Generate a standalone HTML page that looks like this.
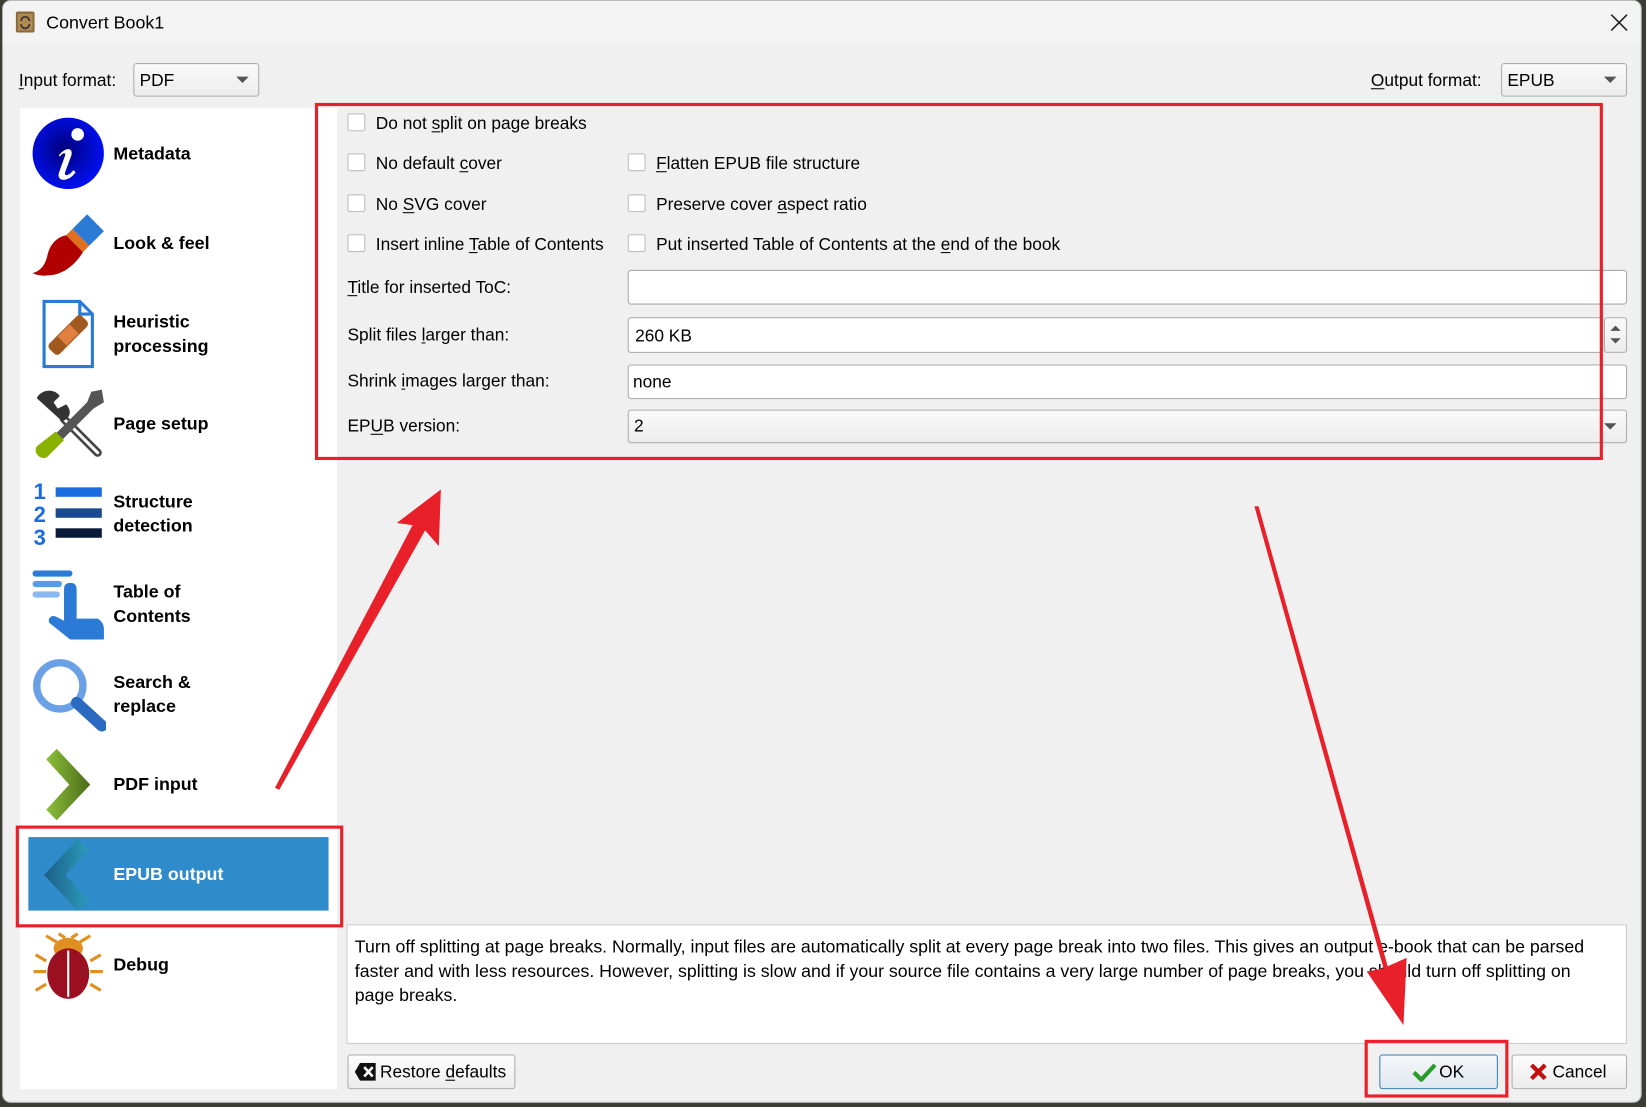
<!DOCTYPE html>
<html><head><meta charset="utf-8"><style>
html,body{margin:0;padding:0;width:1646px;height:1107px;overflow:hidden;background:#3a3d34;}
#w{position:absolute;left:0;top:0;width:1568px;height:1054px;transform:scale(1.0497,1.0503);transform-origin:0 0;font-family:"Liberation Sans",sans-serif;color:#000;}
.a{position:absolute;}
.win{left:2px;top:0;width:1562px;height:1050px;background:#f0f0f0;border-radius:8px;border:1px solid #bbb;box-sizing:border-box;}
.tb{left:3px;top:1px;width:1560px;height:42px;background:#f3f3f3;border-radius:8px 8px 0 0;}
.t{font-size:16.5px;white-space:nowrap;line-height:20px;}
.cb{width:17px;height:17px;background:#fff;border:1px solid #bcbcbc;box-sizing:border-box;border-radius:2px;}
.fld{background:#fff;border:1px solid #a8a8a8;border-radius:3px;box-sizing:border-box;}
.cmb{background:linear-gradient(#fafafa,#ececec);border:1px solid #adadad;border-radius:3px;box-sizing:border-box;}
.arr{width:0;height:0;border-left:6px solid transparent;border-right:6px solid transparent;border-top:6px solid #555;}
.side{left:19px;top:103px;width:302px;height:934px;background:#fff;}
.it{font-weight:bold;font-size:17px;line-height:23px;left:108px;}
.btn{background:linear-gradient(#fdfdfd,#ececec);border:1px solid #adadad;border-radius:3px;box-sizing:border-box;}
u{text-decoration:underline;text-underline-offset:2px}
</style></head><body><div id="w">
<div class="a win"></div>
<div class="a tb"></div>
<svg class="a" style="left:15px;top:11px" width="18" height="20"><rect x="0" y="0" width="18" height="20" rx="2" fill="#8a6a3c"/><rect x="2" y="2" width="14" height="16" fill="#b08a50"/><path d="M5 9a4 4 0 0 1 8 0M13 12a4 4 0 0 1-8 0" stroke="#333" stroke-width="1.6" fill="none"/></svg>
<div class="a t" style="left:44px;top:12px;font-size:17px">Convert Book1</div>
<svg class="a" style="left:1534px;top:13px" width="17" height="17"><path d="M1 1L16 16M16 1L1 16" stroke="#222" stroke-width="1.5"/></svg>

<div class="a t" style="left:18px;top:67px"><u>I</u>nput format:</div>
<div class="a cmb" style="left:127px;top:60px;width:120px;height:32px"></div>
<div class="a t" style="left:133px;top:67px">PDF</div>
<div class="a arr" style="left:225px;top:73px"></div>
<div class="a t" style="left:1306px;top:67px"><u>O</u>utput format:</div>
<div class="a cmb" style="left:1430px;top:60px;width:120px;height:32px"></div>
<div class="a t" style="left:1436px;top:67px">EPUB</div>
<div class="a arr" style="left:1528px;top:73px"></div>

<div class="a side"></div>
<svg class="a" style="left:31px;top:112px" width="68" height="68"><defs><radialGradient id="g1" cx=".45" cy=".45" r=".55"><stop offset="0" stop-color="#00007a"/><stop offset="1" stop-color="#0010f0"/></radialGradient></defs><circle cx="34" cy="34" r="34" fill="url(#g1)"/><circle cx="43" cy="16" r="6" fill="#fff"/><path d="M25 36c6-8 14-8 12 0l-6 16c-1 4 3 4 8-2l2 2c-6 9-18 10-16 1l6-17c1-3-2-3-5 1z" fill="#fff"/></svg>
<svg class="a" style="left:31px;top:202px" width="70" height="62"><path d="M52 2l16 16-14 14-16-16z" fill="#2a7ad6"/><path d="M38 16l16 16-6 6-16-16z" fill="#e07020"/><path d="M32 22l16 16c-6 10-16 20-30 22-8 1-14 0-18-2 8-2 12-8 14-16 2-10 8-18 18-20z" fill="#b00000"/></svg>
<svg class="a" style="left:40px;top:285px" width="50" height="66"><path d="M2 2h34l12 12v50H2z" fill="#fff" stroke="#2a7ad6" stroke-width="3"/><path d="M36 2v12h12" fill="none" stroke="#2a7ad6" stroke-width="3"/><rect x="18" y="12" width="14" height="44" rx="4" transform="rotate(45 25 34)" fill="#a05a20"/><rect x="19" y="26" width="12" height="16" transform="rotate(45 25 34)" fill="#e08040"/></svg>
<svg class="a" style="left:31px;top:369px" width="70" height="70"><path d="M30 30L62 62" stroke="#444" stroke-width="8" stroke-linecap="round"/><path d="M30 30L62 62" stroke="#fff" stroke-width="3" stroke-linecap="round"/><path d="M4 10c4-8 16-10 22-2l-6 6 4 6 8-4c6 6 4 14-4 16z" fill="#333"/><path d="M66 2l2 12-10 6-34 34-6-6 34-34 4-10z" fill="#555"/><path d="M22 42l8 8-16 16c-6 4-14-4-10-10z" fill="#8ab000"/></svg>
<svg class="a" style="left:32px;top:455px" width="68" height="68"><text x="0" y="20" font-family="Liberation Sans" font-weight="bold" font-size="21" fill="#1a6ce0">1</text><text x="0" y="42" font-family="Liberation Sans" font-weight="bold" font-size="21" fill="#1a6ce0">2</text><text x="0" y="64" font-family="Liberation Sans" font-weight="bold" font-size="21" fill="#1a6ce0">3</text><rect x="21" y="9" width="44" height="9" fill="#1a6ce0"/><rect x="21" y="29" width="44" height="9" fill="#1a4a90"/><rect x="21" y="48" width="44" height="9" fill="#0a1a3a"/></svg>
<svg class="a" style="left:31px;top:543px" width="70" height="66"><rect x="0" y="0" width="38" height="6" rx="3" fill="#2a7ad6"/><rect x="0" y="10" width="28" height="6" rx="3" fill="#5a9ae6"/><rect x="0" y="20" width="26" height="6" rx="3" fill="#8ab8f0"/><path d="M36 12c4 0 6 2 6 6v28h20c4 2 6 6 6 10v10H36L16 50c-2-4 2-8 6-6l8 4V18c0-4 2-6 6-6z" fill="#2a7ad6"/></svg>
<svg class="a" style="left:31px;top:627px" width="70" height="70"><circle cx="26" cy="26" r="22" fill="none" stroke="#6aa0e6" stroke-width="7"/><path d="M42 42l24 22" stroke="#2a6ac0" stroke-width="11" stroke-linecap="round"/></svg>
<svg class="a" style="left:42px;top:713px" width="44" height="68"><defs><linearGradient id="gg" x1="0" x2="1"><stop offset="0" stop-color="#8cc03a"/><stop offset="1" stop-color="#4a6a18"/></linearGradient></defs><path d="M2 10L12 0l32 34-32 34-10-10 22-24z" fill="url(#gg)"/></svg>
<div class="a" style="left:27px;top:797px;width:286px;height:70px;background:#2f8bc9"></div>
<svg class="a" style="left:42px;top:799px" width="44" height="68"><defs><linearGradient id="gb" x1="0" x2="1"><stop offset="0" stop-color="#1c5e88"/><stop offset="1" stop-color="#2a9ab8"/></linearGradient></defs><path d="M42 10L32 0 0 34l32 34 10-10-22-24z" fill="url(#gb)"/></svg>
<svg class="a" style="left:30px;top:887px" width="70" height="66"><path d="M14 4l10 6M56 4l-10 6M26 2l6 4M44 2l-6 4" stroke="#e09020" stroke-width="3"/><ellipse cx="35" cy="16" rx="14" ry="10" fill="#e09020"/><ellipse cx="35" cy="40" rx="20" ry="24" fill="#9a1020"/><path d="M35 18v44" stroke="#fff" stroke-width="2"/><path d="M2 38h12M56 38h12M4 22l10 6M66 22l-10 6M4 56l10-6M66 56l-10-6" stroke="#e09020" stroke-width="3"/></svg>

<div class="a it" style="top:135px">Metadata</div>
<div class="a it" style="top:220px">Look &amp; feel</div>
<div class="a it" style="top:295px">Heuristic<br>processing</div>
<div class="a it" style="top:392px">Page setup</div>
<div class="a it" style="top:466px">Structure<br>detection</div>
<div class="a it" style="top:552px">Table of<br>Contents</div>
<div class="a it" style="top:638px">Search &amp;<br>replace</div>
<div class="a it" style="top:735px">PDF input</div>
<div class="a it" style="top:821px;color:#fff">EPUB output</div>
<div class="a it" style="top:907px">Debug</div>

<div class="a cb" style="left:331px;top:108px"></div><div class="a t" style="left:358px;top:108px">Do not <u>s</u>plit on page breaks</div>
<div class="a cb" style="left:331px;top:146px"></div><div class="a t" style="left:358px;top:146px">No default <u>c</u>over</div>
<div class="a cb" style="left:598px;top:146px"></div><div class="a t" style="left:625px;top:146px"><u>F</u>latten EPUB file structure</div>
<div class="a cb" style="left:331px;top:185px"></div><div class="a t" style="left:358px;top:185px">No <u>S</u>VG cover</div>
<div class="a cb" style="left:598px;top:185px"></div><div class="a t" style="left:625px;top:185px">Preserve cover <u>a</u>spect ratio</div>
<div class="a cb" style="left:331px;top:223px"></div><div class="a t" style="left:358px;top:223px">Insert inline <u>T</u>able of Contents</div>
<div class="a cb" style="left:598px;top:223px"></div><div class="a t" style="left:625px;top:223px">Put inserted Table of Contents at the <u>e</u>nd of the book</div>
<div class="a t" style="left:331px;top:264px"><u>T</u>itle for inserted ToC:</div>
<div class="a fld" style="left:598px;top:257px;width:952px;height:33px"></div>
<div class="a t" style="left:331px;top:309px">Split files <u>l</u>arger than:</div>
<div class="a fld" style="left:598px;top:302px;width:929px;height:34px"></div>
<div class="a t" style="left:605px;top:310px">260 KB</div>
<div class="a cmb" style="left:1528px;top:302px;width:22px;height:34px"></div>
<div class="a" style="left:1534px;top:310px;border-left:5px solid transparent;border-right:5px solid transparent;border-bottom:5px solid #555"></div>
<div class="a arr" style="left:1534px;top:322px;border-left-width:5px;border-right-width:5px;border-top-width:5px"></div>
<div class="a t" style="left:331px;top:353px">Shrink <u>i</u>mages larger than:</div>
<div class="a fld" style="left:598px;top:347px;width:952px;height:33px"></div>
<div class="a t" style="left:603px;top:354px">none</div>
<div class="a t" style="left:331px;top:396px">EP<u>U</u>B version:</div>
<div class="a cmb" style="left:598px;top:390px;width:952px;height:32px"></div>
<div class="a t" style="left:604px;top:396px">2</div>
<div class="a arr" style="left:1528px;top:403px"></div>

<div class="a fld" style="left:330px;top:880px;width:1220px;height:114px;border-radius:0;border-color:#ccc"></div>
<div class="a t" style="left:338px;top:890px;line-height:23px;font-size:16.9px">Turn off splitting at page breaks. Normally, input files are automatically split at every page break into two files. This gives an output e-book that can be parsed<br>faster and with less resources. However, splitting is slow and if your source file contains a very large number of page breaks, you should turn off splitting on<br>page breaks.</div>

<div class="a btn" style="left:331px;top:1004px;width:160px;height:33px"></div>
<svg class="a" style="left:338px;top:1012px" width="20" height="17"><path d="M5 0h15v17H5L0 8.5z" fill="#111"/><path d="M9 4l8 9M17 4l-8 9" stroke="#fff" stroke-width="2.5"/></svg>
<div class="a t" style="left:362px;top:1011px">Restore <u>d</u>efaults</div>
<div class="a btn" style="left:1314px;top:1004px;width:113px;height:33px;border-color:#3c7fb1;background:linear-gradient(#f4f7fa,#e1e8ef)"></div>
<svg class="a" style="left:1345px;top:1012px" width="24" height="18"><path d="M2 9l7 7L22 2" stroke="#2a9a2a" stroke-width="4" fill="none"/></svg>
<div class="a t" style="left:1371px;top:1011px">OK</div>
<div class="a btn" style="left:1440px;top:1004px;width:110px;height:33px"></div>
<svg class="a" style="left:1457px;top:1012px" width="17" height="17"><path d="M2 2l13 13M15 2L2 15" stroke="#c01010" stroke-width="4"/></svg>
<div class="a t" style="left:1479px;top:1011px">Cancel</div>

<div class="a" style="left:300px;top:98px;width:1227px;height:340px;border:3px solid #e8202a;box-sizing:border-box"></div>
<div class="a" style="left:15px;top:786px;width:312px;height:97px;border:3px solid #e8202a;box-sizing:border-box"></div>
<div class="a" style="left:1300px;top:990px;width:137px;height:55px;border:3px solid #e8202a;box-sizing:border-box"></div>
<svg class="a" style="left:0;top:0" width="1568" height="1054"><polygon points="262,750 266,752 405,505 418,520 420,466 378,498 393,500" fill="#e8202a"/><polygon points="1195,482 1199,482 1322,920 1340,912 1337,976 1302,925 1318,922" fill="#e8202a"/></svg>
</div></body></html>
